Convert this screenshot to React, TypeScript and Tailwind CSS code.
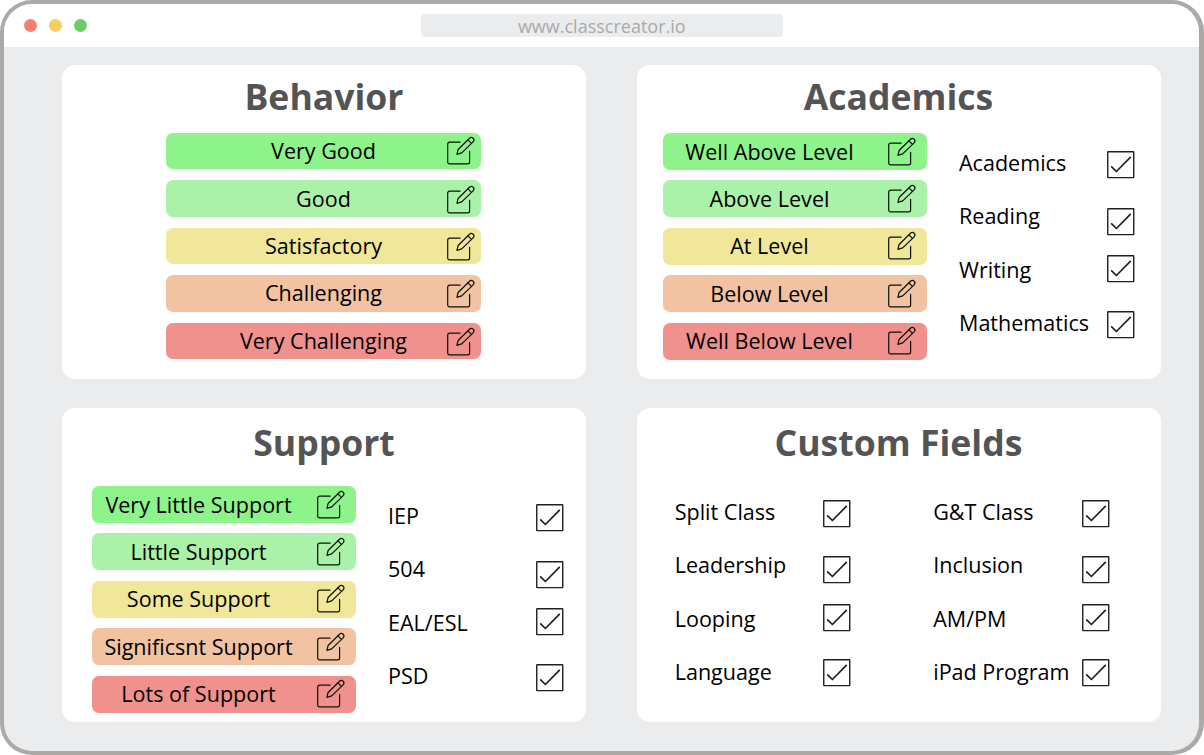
type Row = { label: string; color: string };
type Check = { label: string; gap: string };

const COLORS = ["bg-[#8df38b]", "bg-[#aaf2a9]", "bg-[#f0e79a]", "bg-[#f1c3a2]", "bg-[#f0918e]"];

const rows = (labels: string[]): Row[] => labels.map((label, i) => ({ label, color: COLORS[i] }));

const GAPS = ["", "mt-[29px]", "mt-[19px]", "mt-[28px]"];
const TIGHT_GAPS = ["", "mt-[28.3px]", "mt-[19.7px]", "mt-[27.5px]"];
const checks = (labels: string[], gaps: string[] = GAPS): Check[] => labels.map((label, i) => ({ label, gap: gaps[i] }));

function EditIcon() {
  return (
    <svg width="30" height="30" viewBox="0 -0.6 30 30" fill="none" stroke="#0b120b" strokeWidth="1.2" strokeLinecap="round" strokeLinejoin="round">
      <path d="M14.1 5.6H3.6a1.9 1.9 0 0 0-1.9 1.9v17.9a1.9 1.9 0 0 0 1.9 1.9h18.1a1.9 1.9 0 0 0 1.9-1.9V14.8" />
      <path d="M10.9 17.8l1.2-4.9L23.5 1.6a2.5 2.5 0 0 1 3.6 3.6L15.7 16.3z" />
      <path d="M21.9 3.2l3.6 3.6" />
    </svg>
  );
}

function CheckBox() {
  return (
    <svg className="block" width="28" height="28" viewBox="0 0 28 28" fill="none" stroke="#231f20" strokeLinejoin="round">
      <rect x="0.75" y="0.75" width="26" height="25.9" rx="0.4" strokeWidth="1.4" />
      <path d="M4.7 15.8l4.7 4.7L23.3 6.4" strokeWidth="1.7" strokeLinecap="round" />
    </svg>
  );
}

function Title({ children }: { children: string }) {
  return <h2 className="h-[68.3px] pt-[4px] text-center text-[35.6px] leading-[54px] font-bold text-[#545454]">{children}</h2>;
}

function Levels({ items, wide }: { items: Row[]; wide?: boolean }) {
  return (
    <ul className={`flex flex-col ${wide ? "gap-[11px]" : "gap-[10.4px]"}`}>
      {items.map((r, i) => (
        <li
          key={r.label}
          className={`flex items-center rounded-[7px] ${r.color} ${wide ? "h-[36.4px] w-[315px] pr-[5px] pl-[35px]" : "h-[37px] w-[264px] pr-[10px]"}`}
        >
          <span className={`flex-1 text-center whitespace-nowrap ${wide ? "" : "pr-[11px]"}`}>{r.label}</span>
          <span className={`flex shrink-0 ${wide && i > 0 ? "pt-[2px]" : ""}`}>
            <EditIcon />
          </span>
        </li>
      ))}
    </ul>
  );
}

function Checks({ items, width }: { items: Check[]; width: string }) {
  return (
    <div className={`flex justify-between ${width}`}>
      <ul>
        {items.map((c) => (
          <li key={c.label} className="h-[53.4px] leading-[30px] whitespace-nowrap">
            {c.label}
          </li>
        ))}
      </ul>
      <ul className="pt-[2.7px]">
        {items.map((c) => (
          <li key={c.label} className={c.gap}>
            <CheckBox />
          </li>
        ))}
      </ul>
    </div>
  );
}

export default function App() {
  return (
    <div className="flex h-[755px] w-[1204px] flex-col overflow-hidden rounded-[32px] border-4 border-r-5 border-[#abaaa8] bg-[#ebecee] font-['Open_Sans',sans-serif] text-[21.55px] leading-[30px] text-black">
      <header className="flex h-[43.4px] shrink-0 items-start bg-white">
        <div className="flex w-[416.5px] gap-3 pt-[15.3px] pl-5">
          <i className="size-[13px] rounded-full bg-[#f57f73]" />
          <i className="size-[13px] rounded-full bg-[#f8cd61]" />
          <i className="size-[13px] rounded-full bg-[#6dce66]" />
        </div>
        <div className="mt-[9.8px] h-[23.5px] w-[362.5px] rounded-[4px] bg-[#ebecee] text-center text-[18px] leading-[24px] text-[#a9a9a9]">
          www.classcreator.io
        </div>
      </header>
      <main className="grid grid-cols-[524px_524px] grid-rows-[314.5px_314.5px] gap-x-[50.5px] gap-y-[28.5px] pt-[17.4px] pl-[58px]">
        <section className="rounded-[13px] bg-white">
          <Title>Behavior</Title>
          <div className="pl-[104px]">
            <Levels wide items={rows(["Very Good", "Good", "Satisfactory", "Challenging", "Very Challenging"])} />
          </div>
        </section>
        <section className="rounded-[13px] bg-white">
          <Title>Academics</Title>
          <div className="flex gap-8 pl-[26.5px]">
            <Levels items={rows(["Well Above Level", "Above Level", "At Level", "Below Level", "Well Below Level"])} />
            <div className="pt-[15px]">
              <Checks width="w-[176px]" items={checks(["Academics", "Reading", "Writing", "Mathematics"])} />
            </div>
          </div>
        </section>
        <section className="rounded-[13px] bg-white">
          <div className="h-[78.3px] pt-[3px]">
            <Title>Support</Title>
          </div>
          <div className="flex gap-8 pl-[30px]">
            <Levels items={rows(["Very Little Support", "Little Support", "Some Support", "Significsnt Support", "Lots of Support"])} />
            <div className="pt-[15px]">
              <Checks width="w-[176px]" items={checks(["IEP", "504", "EAL/ESL", "PSD"])} />
            </div>
          </div>
        </section>
        <section className="rounded-[13px] bg-white">
          <div className="h-[89.3px] pt-[3px]">
            <Title>Custom Fields</Title>
          </div>
          <div className="flex gap-[82.5px] pl-[38.2px]">
            <Checks width="w-[176px]" items={checks(["Split Class", "Leadership", "Looping", "Language"], TIGHT_GAPS)} />
            <Checks width="w-[176.5px]" items={checks(["G&T Class", "Inclusion", "AM/PM", "iPad Program"], TIGHT_GAPS)} />
          </div>
        </section>
      </main>
    </div>
  );
}
